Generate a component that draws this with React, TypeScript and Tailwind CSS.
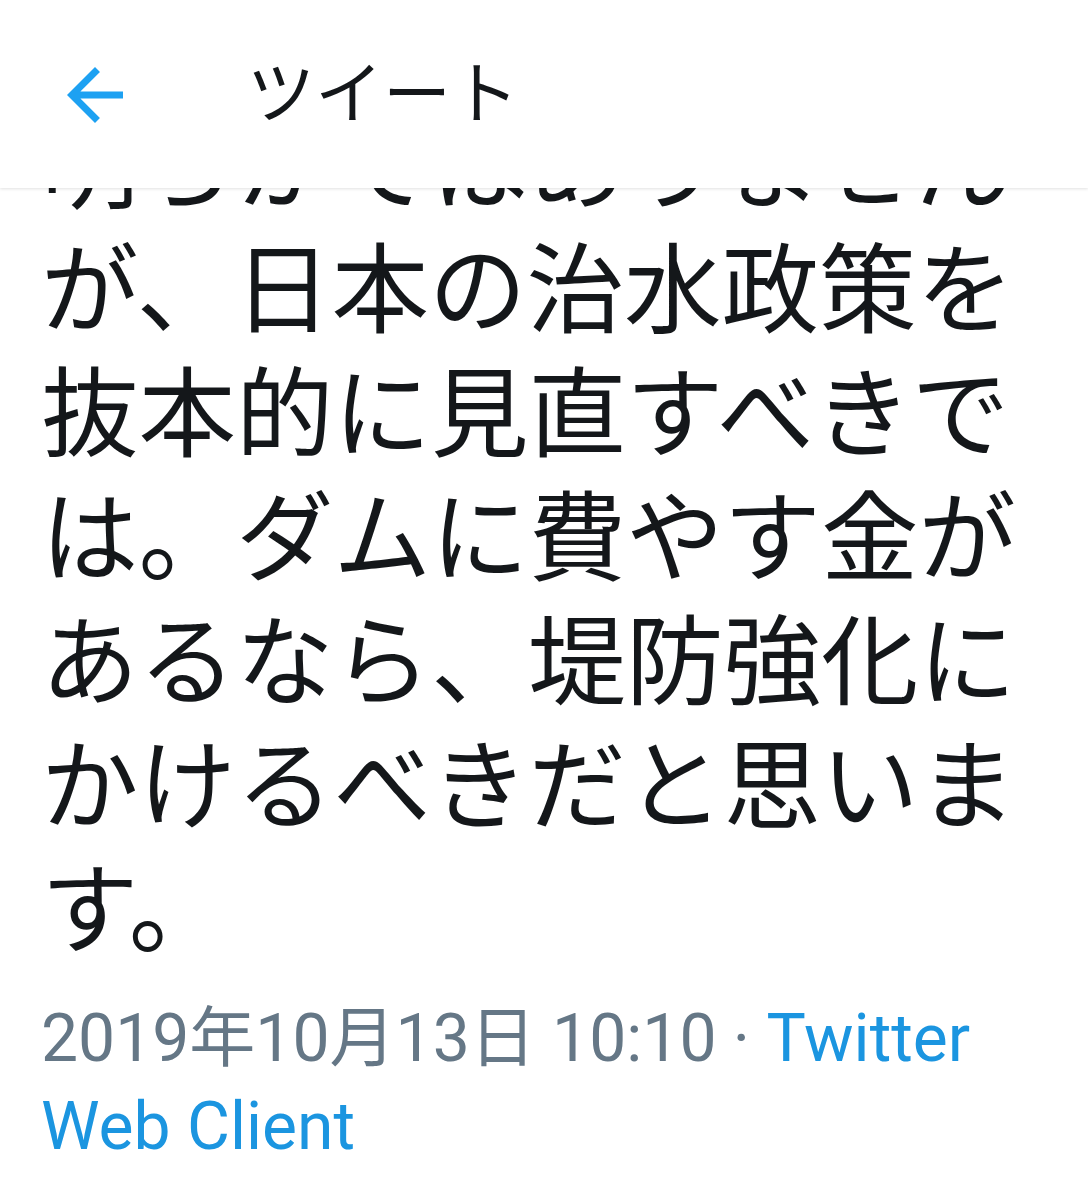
const BODY =
  '明らかではありませんが、日本の治水政策を抜本的に見直すべきでは。ダムに費やす金があるなら、堤防強化にかけるべきだと思います。'

function BackArrow() {
  return (
    <svg viewBox="0 0 24 24" className="w-[84px] h-[84px] fill-[#1da1f2]">
      <path d="M20 11H7.83l5.59-5.59L12 4l-8 8 8 8 1.41-1.41L7.83 13H20v-2z" />
    </svg>
  )
}

export default function App() {
  return (
    <div
      className="relative w-[1088px] h-[1200px] overflow-hidden bg-white text-[#14171a]"
      style={{ fontFamily: 'Roboto, "Noto Sans CJK JP", sans-serif' }}
    >
      {/* header sits over the scrolled tweet */}
      <header className="absolute inset-x-0 top-0 z-10 h-[188px] bg-white flex items-center shadow-[0_1px_3px_rgba(0,0,0,0.12)]">
        <div className="ml-[53px] mt-[2px]">
          <BackArrow />
        </div>
        <h1 className="ml-[110px] mt-[2px] text-[68px] leading-none font-normal">ツイート</h1>
      </header>

      <main className="pt-[97px] px-[41px]">
        <p
          className="text-[97.5px] leading-[124px] break-all"
          style={{ fontFamily: '"Noto Sans CJK JP", sans-serif' }}
        >
          {BODY}
        </p>

        <div className="mt-[30px] text-[66px] leading-[88px] text-[#657786]">
          2019年10月13日 10:10 · <span className="text-[#1b95e0]">Twitter Web Client</span>
        </div>
      </main>
    </div>
  )
}
